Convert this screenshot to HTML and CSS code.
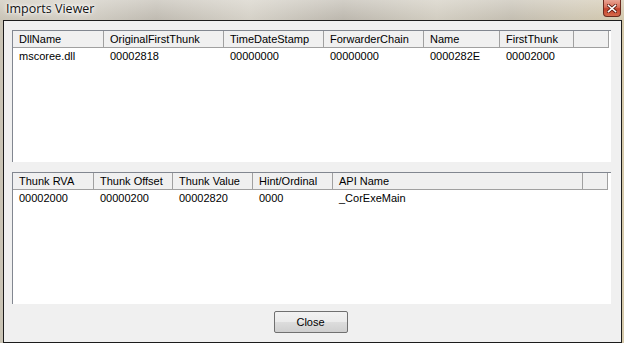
FILE: index.html
```html
<!DOCTYPE html>
<html>
<head>
<meta charset="utf-8">
<link rel="stylesheet" href="styles.css">
</head>
<body>
<div class="window">
  <div class="titlebar">
    <span class="title">Imports Viewer</span>
    <div class="close-x">
      <svg width="10" height="9" viewBox="0 0 10 9">
        <path d="M1.5 1.5 L8.5 7.5 M8.5 1.5 L1.5 7.5" stroke="#5a1a10" stroke-width="3.2" stroke-linecap="square"/>
        <path d="M1.5 1.5 L8.5 7.5 M8.5 1.5 L1.5 7.5" stroke="#ffffff" stroke-width="1.6" stroke-linecap="square"/>
      </svg>
    </div>
  </div>
  <div class="client">
    <div class="list">
      <div class="row head top-cols">
        <div class="cell">DllName</div>
        <div class="cell">OriginalFirstThunk</div>
        <div class="cell">TimeDateStamp</div>
        <div class="cell">ForwarderChain</div>
        <div class="cell">Name</div>
        <div class="cell">FirstThunk</div>
        <div class="cell"></div>
      </div>
      <div class="row data top-cols">
        <div class="cell">mscoree.dll</div>
        <div class="cell">00002818</div>
        <div class="cell">00000000</div>
        <div class="cell">00000000</div>
        <div class="cell">0000282E</div>
        <div class="cell">00002000</div>
        <div class="cell"></div>
      </div>
    </div>
    <div class="list">
      <div class="row head bot-cols">
        <div class="cell">Thunk RVA</div>
        <div class="cell">Thunk Offset</div>
        <div class="cell">Thunk Value</div>
        <div class="cell">Hint/Ordinal</div>
        <div class="cell">API Name</div>
        <div class="cell"></div>
      </div>
      <div class="row data bot-cols">
        <div class="cell">00002000</div>
        <div class="cell">00000200</div>
        <div class="cell">00002820</div>
        <div class="cell">0000</div>
        <div class="cell">_CorExeMain</div>
        <div class="cell"></div>
      </div>
    </div>
    <div class="footer">
      <button class="btn">Close</button>
    </div>
  </div>
</div>
</body>
</html>
```

FILE: styles.css
```css
html, body {
  margin: 0;
  padding: 0;
}
body {
  width: 624px;
  height: 343px;
  overflow: hidden;
  font-family: "Liberation Sans", Arial, sans-serif;
  font-size: 11px;
  color: #000;
}
.window {
  width: 624px;
  height: 343px;
  box-sizing: border-box;
  padding: 0 2px 0 3px;
  background: linear-gradient(90deg, #c9c3b4 0%, #d6d2c8 12%, #bdb8ae 25%, #d8d4ca 40%, #b9b4aa 55%, #d4cfc2 70%, #c2bcae 82%, #cfc6b0 92%, #d5c9aa 100%);
  display: flex;
  flex-direction: column;
}
.titlebar {
  height: 20px;
  flex: none;
  display: flex;
  align-items: flex-start;
  justify-content: space-between;
  background: linear-gradient(180deg, rgba(235,233,228,0.5) 0%, rgba(200,196,188,0.2) 100%);
  margin: 0 -2px 0 -3px;
  padding: 0 3px 0 3px;
}
.title {
  font-family: "Open Sans", "DejaVu Sans", sans-serif;
  font-size: 12.5px;
  line-height: 18px;
  margin-left: 3px;
  color: #111;
  text-shadow: 0 0 6px #fff, 0 0 4px #fff, 0 0 2px #fff;
}
.close-x {
  width: 18px;
  height: 17px;
  box-sizing: border-box;
  border: 1px solid #6b2a1e;
  border-top: none;
  border-radius: 0 0 4px 4px;
  background: linear-gradient(180deg, #e9a393 0%, #d9705a 45%, #c2402a 55%, #d66a4c 100%);
  display: flex;
  align-items: center;
  justify-content: center;
}
.client {
  flex: 1;
  box-sizing: border-box;
  border: 1px solid #1c1c1c;
  background: #f0f0f0;
  padding: 9px 10px 0 8px;
  display: flex;
  flex-direction: column;
  gap: 10px;
}
.list {
  height: 132px;
  flex: none;
  box-sizing: border-box;
  background: #fff;
  border-left: 1px solid #828790;
  border-top: 1px solid #828790;
}
.row {
  display: grid;
  height: 17px;
}
.top-cols {
  grid-template-columns: 91px 120px 100px 100px 76px 74px 35px;
}
.bot-cols {
  grid-template-columns: 81px 79px 80px 80px 250px 25px;
}
.head .cell {
  background: #f0f0f0;
  border-right: 1px solid #a0a0a0;
  border-bottom: 1px solid #a0a0a0;
  box-sizing: border-box;
  line-height: 16px;
  padding-left: 6px;
}
.data .cell {
  line-height: 17px;
  padding-left: 6px;
}
.cell {
  white-space: nowrap;
  overflow: hidden;
}
.footer {
  display: flex;
  justify-content: center;
  margin-top: -3px;
}
.btn {
  width: 74px;
  height: 22px;
  box-sizing: border-box;
  border: 1px solid #707070;
  border-radius: 2px;
  background: linear-gradient(180deg, #f2f2f2 0%, #ebebeb 50%, #dddddd 51%, #cfcfcf 100%);
  font-family: "Liberation Sans", Arial, sans-serif;
  font-size: 11px;
  color: #000;
  padding: 0;
  margin-right: 2px;
}
```
